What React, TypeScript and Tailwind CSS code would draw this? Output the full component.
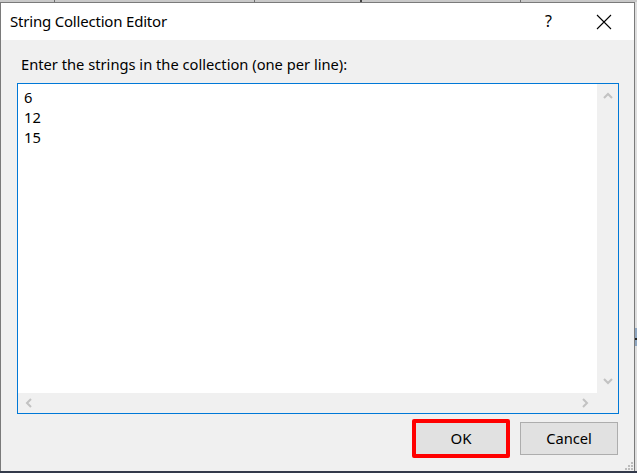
import React from "react";

const Chevron = ({ dir }: { dir: "up" | "down" | "left" | "right" }) => {
  const paths: Record<string, string> = {
    up: "M1 6 L5 2 L9 6",
    down: "M1 2 L5 6 L9 2",
    left: "M6 1 L2 5 L6 9",
    right: "M2 1 L6 5 L2 9",
  };
  const vertical = dir === "up" || dir === "down";
  return (
    <svg
      width={vertical ? 10 : 8}
      height={vertical ? 8 : 10}
      viewBox={vertical ? "0 0 10 8" : "0 0 8 10"}
      className="block"
    >
      <path d={paths[dir]} fill="none" stroke="#c2c2c2" strokeWidth="2" />
    </svg>
  );
};

export default function App() {
  const font = { fontFamily: '"Noto Sans", "Open Sans", sans-serif' };
  return (
    <div
      className="w-[637px] h-[473px] overflow-hidden bg-[#d9d9d9] flex flex-col relative"
      style={font}
    >
      {/* top strip of background window */}
      <div className="h-[2px] bg-[#c9c9c9] flex shrink-0">
        <div className="w-[54px]" />
        <div className="w-[1px] bg-[#6e6e6e]" />
        <div className="w-[199px]" />
        <div className="w-[1px] bg-[#6e6e6e]" />
        <div className="w-[105px]" />
        <div className="w-[2px] bg-[#444]" />
        <div className="w-[158px]" />
        <div className="w-[1px] bg-[#6e6e6e]" />
      </div>
      <div className="flex flex-1 min-h-0">
        {/* dialog */}
        <div className="w-[635px] border border-[#7a7a7a] border-b-0 flex flex-col bg-[#f0f0f0]">
          {/* title bar */}
          <div className="h-[37px] bg-white flex items-center pl-[9px] shrink-0">
            <div className="text-[15px] tracking-[-0.2px] text-black flex-1 leading-none pb-[1px]">
              String Collection Editor
            </div>
            <div className="text-[16px] text-black w-[10px] mr-[41px] leading-none pb-[1px]">?</div>
            <svg width="16" height="16" viewBox="0 0 16 16" className="mr-[22px]">
              <path d="M1 1 L15 15 M15 1 L1 15" stroke="#000" strokeWidth="1.1" />
            </svg>
          </div>
          {/* body */}
          <div className="flex-1 flex flex-col pt-[14px]">
            <div className="pl-[20px] h-[20px] text-[14.7px] leading-[20px] text-black">
              Enter the strings in the collection (one per line):
            </div>
            <div className="ml-[16px] mt-[9px] w-[602px] h-[331px] border border-[#0078d7] bg-white flex flex-col shrink-0">
              <div className="flex flex-1 min-h-0">
                <div className="flex-1 pl-[6px] pt-[3px] text-[14.7px] leading-[20px] text-black">
                  <div>6</div>
                  <div>12</div>
                  <div>15</div>
                </div>
                <div className="w-[21px] bg-[#f0f0f0] flex flex-col items-center justify-between pt-[8px] pb-[8px]">
                  <Chevron dir="up" />
                  <Chevron dir="down" />
                </div>
              </div>
              <div className="h-[20px] bg-[#f0f0f0] flex items-center justify-between pl-[7px] pr-[29px]">
                <Chevron dir="left" />
                <Chevron dir="right" />
              </div>
            </div>
            <div className="flex items-center justify-end mt-[5px] pr-[16px] gap-[10px]">
              <div className="w-[98px] h-[39px] border-[4px] border-[#ff0000] rounded-[2px] bg-[#e1e1e1] flex items-center justify-center text-[15px] text-black">
                OK
              </div>
              <div className="w-[98px] h-[33px] border border-[#adadad] bg-[#e1e1e1] flex items-center justify-center text-[14.7px] text-black">
                Cancel
              </div>
            </div>
            <div className="flex-1 flex justify-end items-end pr-[1px] pb-[1px]">
              <svg width="8" height="8" viewBox="0 0 8 8">
                <rect x="6" y="0" width="2" height="2" fill="#bcbcbc" />
                <rect x="3" y="3" width="2" height="2" fill="#bcbcbc" />
                <rect x="6" y="3" width="2" height="2" fill="#bcbcbc" />
                <rect x="0" y="6" width="2" height="2" fill="#bcbcbc" />
                <rect x="3" y="6" width="2" height="2" fill="#bcbcbc" />
                <rect x="6" y="6" width="2" height="2" fill="#bcbcbc" />
              </svg>
            </div>
          </div>
        </div>
        {/* right strip of background window */}
        <div className="w-[2px] flex flex-col bg-[#dedede]">
          <div className="h-[326px]" />
          <div className="h-[10px] bg-[#8fa6c0]" />
          <div className="h-[2px] bg-[#222]" />
          <div className="h-[6px] bg-[#8fa6c0]" />
        </div>
      </div>
      <div className="h-[2px] bg-[#333a4b] shrink-0" />
    </div>
  );
}
